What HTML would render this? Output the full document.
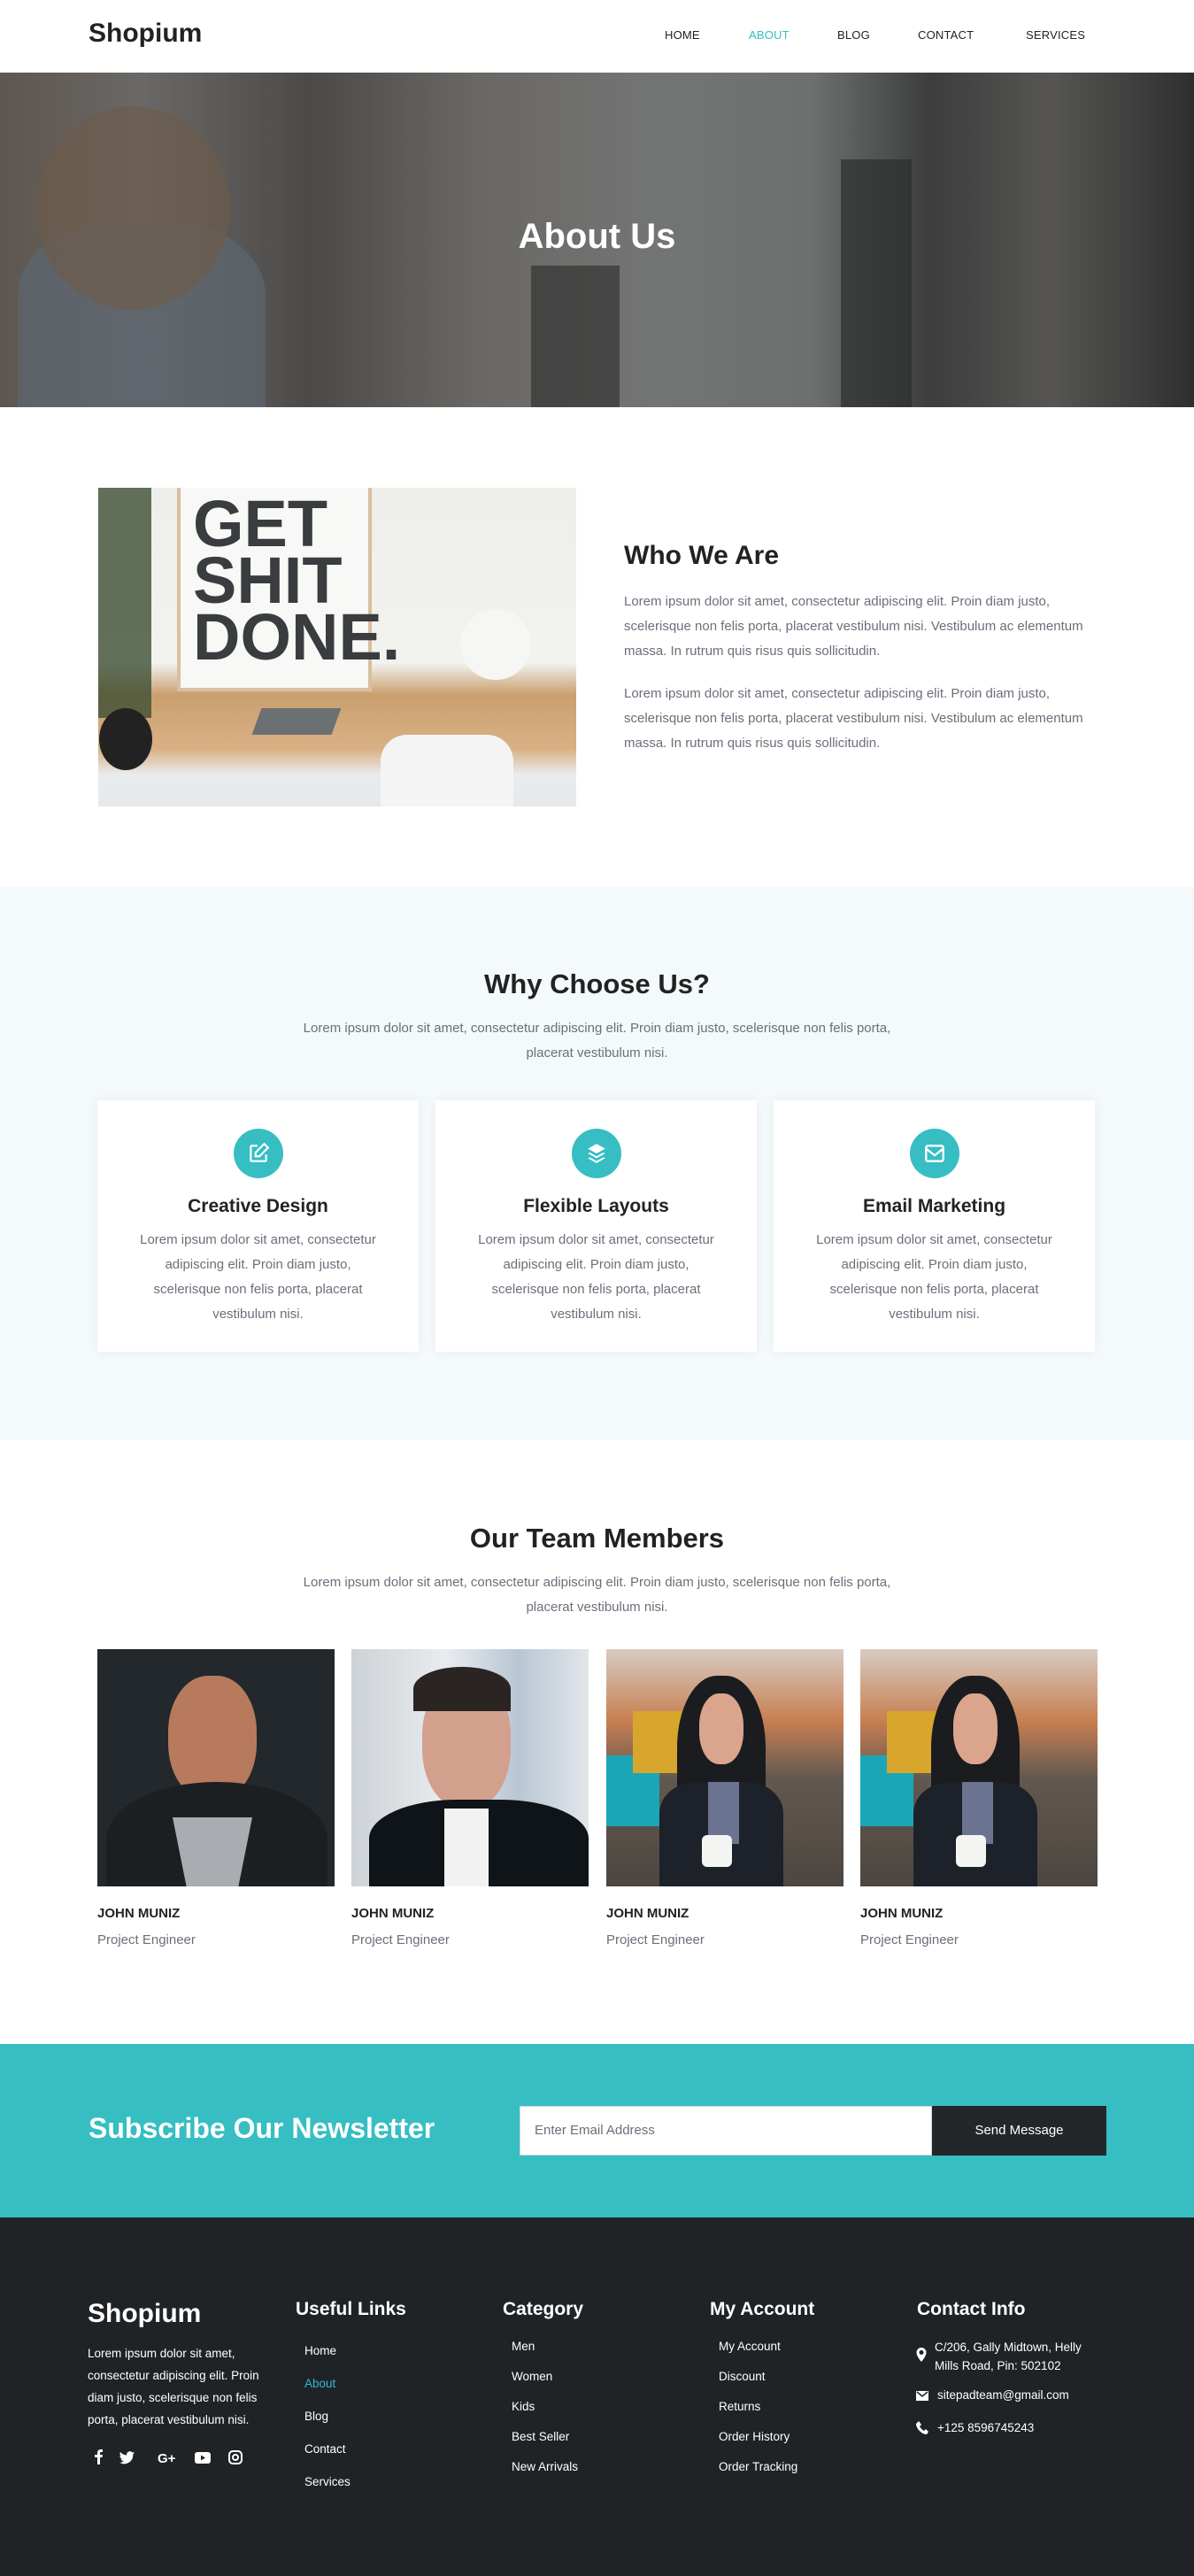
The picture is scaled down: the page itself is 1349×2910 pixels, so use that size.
<!DOCTYPE html>
<html><head><meta charset="utf-8"><style>
*{margin:0;padding:0;box-sizing:border-box}
body{width:1349px;height:2910px;font-family:"Liberation Sans",sans-serif;background:#fff;position:relative;overflow:hidden;color:#222}
.a{position:absolute}
h1,h2,h3,h4{font-family:"Liberation Sans",sans-serif;font-weight:700;color:#222}
.p{color:#6b6f7a;font-size:15px;line-height:28px}
.nav a{position:absolute;top:32px;font-size:13px;color:#222;letter-spacing:.2px}
.card{position:absolute;top:1243px;width:363px;height:284px;background:#fff;box-shadow:0 0 12px rgba(0,0,0,.06);text-align:center}
.ic{width:56px;height:56px;border-radius:50%;background:#36bec3;margin:32px auto 0;display:flex;align-items:center;justify-content:center}
.card h3{font-size:21px;margin-top:20px;font-weight:700}
.card .p{margin:12px auto 0;width:280px}
.ph{position:absolute;top:1863px;width:268px;height:268px;overflow:hidden}
.nm{position:absolute;top:2153px;font-size:15px;font-weight:700;color:#222}
.rl{position:absolute;top:2183px;font-size:15px;color:#6b6f7a}
.fh{position:absolute;top:2597px;font-size:21px;color:#fff;font-weight:700}
.fl{position:absolute;font-size:13.5px;color:#fff}
</style></head><body>
<div class="a" style="left:100px;top:21px;font-size:30px;font-weight:700;color:#222">Shopium</div>
<div class="nav">
<a style="left:751px">HOME</a><a style="left:846px;color:#36bec3">ABOUT</a><a style="left:946px">BLOG</a><a style="left:1037px">CONTACT</a><a style="left:1159px">SERVICES</a>
</div>
<div class="a" style="left:0;top:82px;width:1349px;height:378px;background:linear-gradient(90deg,#5e5650 0%,#6a6866 12%,#4c4a48 26%,#6a6764 40%,#737574 55%,#6d706f 68%,#3c3d3d 78%,#565553 88%,#2e2f2f 100%)"></div>
<div class="a" style="left:20px;top:250px;width:280px;height:210px;background:#5d6670;opacity:.7;border-radius:40% 40% 0 0"></div>
<div class="a" style="left:40px;top:120px;width:220px;height:230px;background:#6e5a48;opacity:.6;border-radius:50%"></div>
<div class="a" style="left:600px;top:300px;width:100px;height:160px;background:#2a2a2a;opacity:.6"></div>
<div class="a" style="left:950px;top:180px;width:80px;height:280px;background:#2c2d2d;opacity:.7"></div>
<div class="a" style="left:0;top:245px;width:1349px;text-align:center;font-size:40px;font-weight:700;color:#fff">About Us</div>
<div class="a" style="left:111px;top:551px;width:540px;height:360px;background:linear-gradient(180deg,#eeeeea 0%,#f2f2ef 55%,#c99f6e 65%,#d9b184 82%,#e8ecee 90%,#e6e9eb 100%)"></div>
<div class="a" style="left:200px;top:551px;width:220px;height:230px;background:#f8f8f6;border:4px solid #d9bfa0;border-top:none"></div>
<div class="a" style="left:218px;top:560px;font-size:74px;line-height:64px;font-weight:700;color:#3a3d40;font-family:'Liberation Sans Narrow','Liberation Sans',sans-serif">GET<br>SHIT<br>DONE.</div>
<div class="a" style="left:111px;top:551px;width:60px;height:260px;background:#3d4f33;opacity:.8"></div>
<div class="a" style="left:520px;top:688px;width:80px;height:80px;border-radius:50%;background:#f6f6f4"></div>
<div class="a" style="left:290px;top:800px;width:90px;height:30px;background:#6b7072;transform:skewX(-20deg)"></div>
<div class="a" style="left:112px;top:800px;width:60px;height:70px;background:#222;border-radius:50%"></div>
<div class="a" style="left:430px;top:830px;width:150px;height:81px;background:#f4f4f4;border-radius:30px 30px 0 0"></div>
<h2 class="a" style="left:705px;top:611px;font-size:30px">Who We Are</h2>
<div class="a p" style="left:705px;top:666px;width:522px">Lorem ipsum dolor sit amet, consectetur adipiscing elit. Proin diam justo, scelerisque non felis porta, placerat vestibulum nisi. Vestibulum ac elementum massa. In rutrum quis risus quis sollicitudin.</div>
<div class="a p" style="left:705px;top:770px;width:522px">Lorem ipsum dolor sit amet, consectetur adipiscing elit. Proin diam justo, scelerisque non felis porta, placerat vestibulum nisi. Vestibulum ac elementum massa. In rutrum quis risus quis sollicitudin.</div>
<div class="a" style="left:0;top:1002px;width:1349px;height:625px;background:#f4f9fb"></div>
<h2 class="a" style="left:0;top:1094px;width:1349px;text-align:center;font-size:31px">Why Choose Us?</h2>
<div class="a p" style="left:330px;top:1148px;width:689px;text-align:center">Lorem ipsum dolor sit amet, consectetur adipiscing elit. Proin diam justo, scelerisque non felis porta, placerat vestibulum nisi.</div>
<div class="card" style="left:110px"><div class="ic"><svg width="26" height="26" viewBox="0 0 24 24" fill="none" stroke="#fff" stroke-width="2"><path d="M11 4H5a1 1 0 0 0-1 1v14a1 1 0 0 0 1 1h14a1 1 0 0 0 1-1v-6"/><path d="M18 2l4 4-9 9H9v-4z"/></svg></div><h3>Creative Design</h3><div class="p">Lorem ipsum dolor sit amet, consectetur adipiscing elit. Proin diam justo, scelerisque non felis porta, placerat vestibulum nisi.</div></div>
<div class="card" style="left:492px"><div class="ic"><svg width="26" height="26" viewBox="0 0 24 24" fill="#fff"><path d="M12 2l9 5-9 5-9-5z"/><path d="M3 12l2-1 7 4 7-4 2 1-9 5z"/><path d="M3 17l2-1 7 4 7-4 2 1-9 5z"/></svg></div><h3>Flexible Layouts</h3><div class="p">Lorem ipsum dolor sit amet, consectetur adipiscing elit. Proin diam justo, scelerisque non felis porta, placerat vestibulum nisi.</div></div>
<div class="card" style="left:874px"><div class="ic"><svg width="26" height="26" viewBox="0 0 24 24" fill="none" stroke="#fff" stroke-width="2.2"><rect x="3" y="4" width="18" height="16" rx="2"/><path d="M3 7l9 7 9-7"/></svg></div><h3>Email Marketing</h3><div class="p">Lorem ipsum dolor sit amet, consectetur adipiscing elit. Proin diam justo, scelerisque non felis porta, placerat vestibulum nisi.</div></div>
<h2 class="a" style="left:0;top:1720px;width:1349px;text-align:center;font-size:31px">Our Team Members</h2>
<div class="a p" style="left:330px;top:1774px;width:689px;text-align:center">Lorem ipsum dolor sit amet, consectetur adipiscing elit. Proin diam justo, scelerisque non felis porta, placerat vestibulum nisi.</div>
<div class="ph" style="left:110px;background:#23282c"><div class="a" style="left:80px;top:30px;width:100px;height:140px;border-radius:45%;background:#b77a5c"></div><div class="a" style="left:10px;top:150px;width:250px;height:130px;border-radius:50% 50% 0 0;background:#1c1f22"></div><div class="a" style="left:85px;top:190px;width:90px;height:90px;background:#a9acb0;clip-path:polygon(0 0,100% 0,80% 100%,20% 100%)"></div></div>
<div class="ph" style="left:397px;background:linear-gradient(90deg,#cdd2d6,#e9ecef 40%,#b8c6d4 70%,#e2e6ea)"><div class="a" style="left:80px;top:30px;width:100px;height:150px;border-radius:45%;background:#d2a08d"></div><div class="a" style="left:70px;top:20px;width:110px;height:50px;border-radius:50% 50% 0 0;background:#2a2522"></div><div class="a" style="left:20px;top:170px;width:248px;height:110px;background:#0f1418;border-radius:40% 40% 0 0"></div><div class="a" style="left:105px;top:180px;width:50px;height:88px;background:#f2f2f2"></div></div>
<div class="ph" style="left:685px;background:linear-gradient(180deg,#d8ccc3 0%,#c87f52 30%,#615850 55%,#4d4640 100%)"><div class="a" style="left:0;top:120px;width:60px;height:80px;background:#1ba6b8"></div><div class="a" style="left:30px;top:70px;width:60px;height:70px;background:#d8a62c"></div><div class="a" style="left:80px;top:30px;width:100px;height:180px;border-radius:45% 45% 10% 10%;background:#1a1c20"></div><div class="a" style="left:105px;top:50px;width:50px;height:80px;border-radius:45%;background:#dba48d"></div><div class="a" style="left:60px;top:150px;width:140px;height:118px;background:#1d2129;border-radius:30% 30% 0 0"></div><div class="a" style="left:115px;top:150px;width:35px;height:70px;background:#6a7390"></div><div class="a" style="left:108px;top:210px;width:34px;height:36px;background:#f4f4f2;border-radius:6px"></div></div>
<div class="ph" style="left:972px;background:linear-gradient(180deg,#d8ccc3 0%,#c87f52 30%,#615850 55%,#4d4640 100%)"><div class="a" style="left:0;top:120px;width:60px;height:80px;background:#1ba6b8"></div><div class="a" style="left:30px;top:70px;width:60px;height:70px;background:#d8a62c"></div><div class="a" style="left:80px;top:30px;width:100px;height:180px;border-radius:45% 45% 10% 10%;background:#1a1c20"></div><div class="a" style="left:105px;top:50px;width:50px;height:80px;border-radius:45%;background:#dba48d"></div><div class="a" style="left:60px;top:150px;width:140px;height:118px;background:#1d2129;border-radius:30% 30% 0 0"></div><div class="a" style="left:115px;top:150px;width:35px;height:70px;background:#6a7390"></div><div class="a" style="left:108px;top:210px;width:34px;height:36px;background:#f4f4f2;border-radius:6px"></div></div>
<div class="nm" style="left:110px">JOHN MUNIZ</div><div class="nm" style="left:397px">JOHN MUNIZ</div><div class="nm" style="left:685px">JOHN MUNIZ</div><div class="nm" style="left:972px">JOHN MUNIZ</div>
<div class="rl" style="left:110px">Project Engineer</div><div class="rl" style="left:397px">Project Engineer</div><div class="rl" style="left:685px">Project Engineer</div><div class="rl" style="left:972px">Project Engineer</div>
<div class="a" style="left:0;top:2309px;width:1349px;height:196px;background:#36bec3"></div>
<div class="a" style="left:100px;top:2386px;font-size:32px;font-weight:700;color:#fff">Subscribe Our Newsletter</div>
<div class="a" style="left:587px;top:2379px;width:466px;height:56px;background:#fff;border:1px solid #cfd6d8;padding:0 16px;line-height:54px;font-size:15px;color:#6b6f7a">Enter Email Address</div>
<div class="a" style="left:1053px;top:2379px;width:197px;height:56px;background:#23272a;color:#fff;text-align:center;line-height:56px;font-size:15px">Send Message</div>
<div class="a" style="left:0;top:2505px;width:1349px;height:405px;background:#202325"></div>
<div class="a" style="left:99px;top:2597px;font-size:30px;font-weight:700;color:#fff">Shopium</div>
<div class="a" style="left:99px;top:2646px;width:215px;font-size:13.5px;line-height:25px;color:#fff">Lorem ipsum dolor sit amet, consectetur adipiscing elit. Proin diam justo, scelerisque non felis porta, placerat vestibulum nisi.</div>
<svg class="a" style="left:104px;top:2766px" width="180" height="20" viewBox="0 0 180 20" fill="#fff"><path d="M6 18V10H3V7h3V5c0-3 2-4 4-4h2v3h-2c-1 0-1 .5-1 1v2h3l-.5 3H9v8z"/><path d="M48 5c-.7.3-1.4.5-2 .6.7-.5 1.3-1.2 1.5-2-.7.4-1.5.7-2.2.8a3.5 3.5 0 0 0-6 3.2A10 10 0 0 1 32 4c-1 1.7-.4 3.8 1 4.7-.6 0-1.1-.2-1.6-.4 0 1.7 1.2 3.2 2.8 3.5-.5.2-1 .2-1.6.1.5 1.4 1.8 2.4 3.3 2.4A7 7 0 0 1 31 15.8 10 10 0 0 0 46.3 7v-.5c.7-.5 1.3-1 1.7-1.5z"/><text x="74" y="16" font-family="Liberation Sans" font-size="15" font-weight="700">G+</text><rect x="116" y="4" width="18" height="13" rx="3"/><path d="M123 7.5v6l5-3z" fill="#202325"/><rect x="155" y="3" width="14" height="14" rx="4" fill="none" stroke="#fff" stroke-width="2"/><circle cx="162" cy="10" r="3" fill="none" stroke="#fff" stroke-width="2"/></svg>
<div class="fh" style="left:334px">Useful Links</div>
<div class="fh" style="left:568px">Category</div>
<div class="fh" style="left:802px">My Account</div>
<div class="fh" style="left:1036px">Contact Info</div>
<div class="fl" style="left:344px;top:2648px">Home</div><div class="fl" style="left:344px;top:2685px;color:#36b5d8">About</div><div class="fl" style="left:344px;top:2722px">Blog</div><div class="fl" style="left:344px;top:2759px">Contact</div><div class="fl" style="left:344px;top:2796px">Services</div>
<div class="fl" style="left:578px;top:2643px">Men</div><div class="fl" style="left:578px;top:2677px">Women</div><div class="fl" style="left:578px;top:2711px">Kids</div><div class="fl" style="left:578px;top:2745px">Best Seller</div><div class="fl" style="left:578px;top:2779px">New Arrivals</div>
<div class="fl" style="left:812px;top:2643px">My Account</div><div class="fl" style="left:812px;top:2677px">Discount</div><div class="fl" style="left:812px;top:2711px">Returns</div><div class="fl" style="left:812px;top:2745px">Order History</div><div class="fl" style="left:812px;top:2779px">Order Tracking</div>
<svg class="a" style="left:1035px;top:2652px" width="12" height="16" viewBox="0 0 12 16" fill="#fff"><path d="M6 0a5.5 5.5 0 0 0-5.5 5.5C.5 10 6 16 6 16s5.5-6 5.5-10.5A5.5 5.5 0 0 0 6 0zm0 8a2.5 2.5 0 1 1 0-5 2.5 2.5 0 0 1 0 5z"/></svg>
<div class="fl" style="left:1056px;top:2641px;line-height:21px">C/206, Gally Midtown, Helly<br>Mills Road, Pin: 502102</div>
<svg class="a" style="left:1035px;top:2701px" width="14" height="11" viewBox="0 0 14 11"><rect width="14" height="11" fill="#fff"/><path d="M1 1l6 5 6-5" fill="none" stroke="#202325" stroke-width="1.5"/></svg>
<div class="fl" style="left:1059px;top:2698px">sitepadteam@gmail.com</div>
<svg class="a" style="left:1035px;top:2735px" width="14" height="15" viewBox="0 0 14 15" fill="#fff"><path d="M3 0l3 4-2 2c1 2 3 4 5 5l2-2 3 3-2 3C6 15 0 8 0 3z"/></svg>
<div class="fl" style="left:1059px;top:2735px">+125 8596745243</div>
</body></html>
